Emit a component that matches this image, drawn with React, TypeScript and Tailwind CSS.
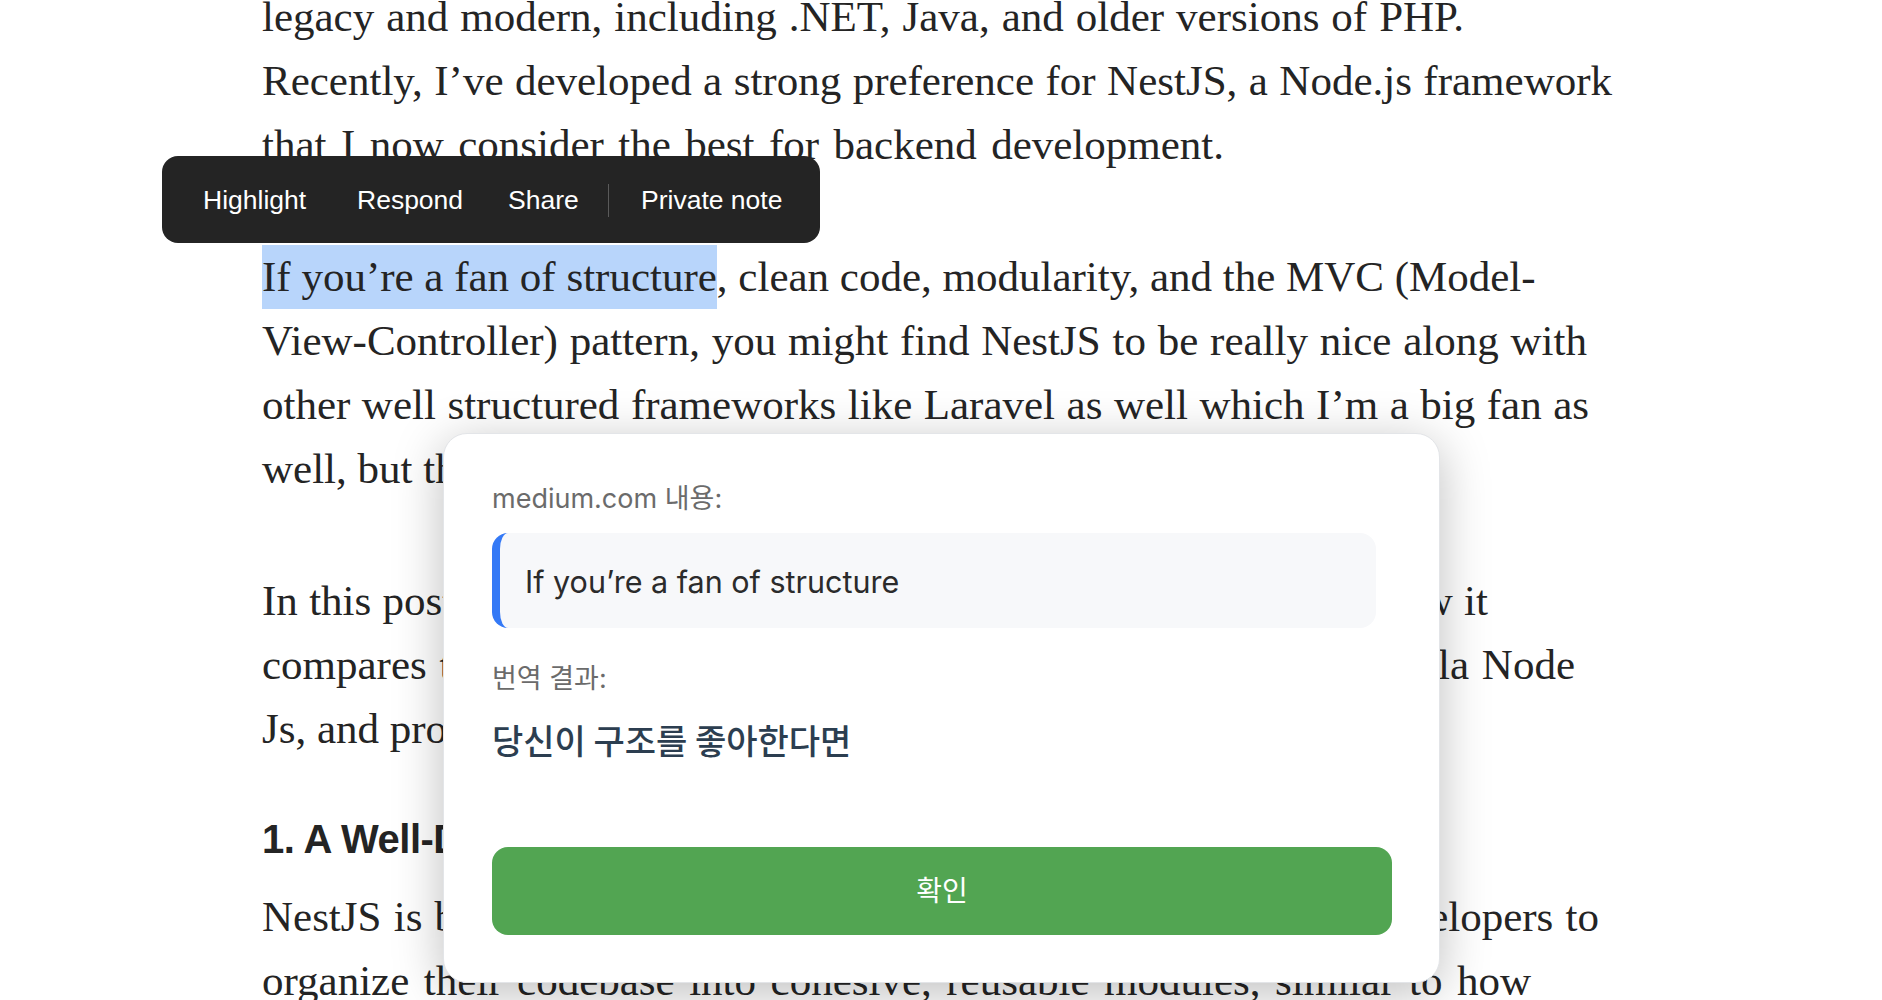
import React from "react";

const serif = "font-['Liberation_Serif','Times_New_Roman',serif]";

function Line({ w, children }: { w: number; children: React.ReactNode }) {
  return (
    <div
      className="whitespace-nowrap text-justify [text-align-last:justify]"
      style={{ width: w }}
    >
      {children}
    </div>
  );
}

export default function App() {
  return (
    <div className="relative w-[1882px] h-[1000px] overflow-hidden bg-white text-[#242424]">
      <div className={`${serif} text-[43px] leading-[64px] pl-[262px]`}>
        <div className="mt-[-15px]">
          <Line w={1202}>legacy and modern, including .NET, Java, and older versions of PHP.</Line>
          <Line w={1350}>Recently, I’ve developed a strong preference for NestJS, a Node.js framework</Line>
          <Line w={962}>that I now consider the best for backend development.</Line>
        </div>
        <div className="mt-[68px]">
          <Line w={1273}>
            <span className="inline-block bg-[#b8d5fb]">If you’re a fan of structure</span>, clean code, modularity, and the MVC (Model-
          </Line>
          <Line w={1325}>View-Controller) pattern, you might find NestJS to be really nice along with</Line>
          <Line w={1327}>other well structured frameworks like Laravel as well which I’m a big fan as</Line>
          <div className="whitespace-nowrap">well, but that’s a story for another time.</div>
        </div>
        <div className="mt-[68px]">
          <Line w={1226}>In this post, I’ll walk through why I think NestJS is really great, how it</Line>
          <Line w={1313}>compares to other popular frameworks such as Express.js and vanilla Node</Line>
          <div className="whitespace-nowrap">Js, and provide some examples.</div>
        </div>
        <h2 className="mt-[52px] font-['Liberation_Sans',Arial,sans-serif] font-bold text-[40px] leading-[52px] tracking-[-0.5px]">
          1. A Well-Defined Architecture
        </h2>
        <div className="mt-[20px]">
          <Line w={1337}>NestJS is built around a modular architecture, which allows all developers to</Line>
          <Line w={1269}>organize their codebase into cohesive, reusable modules, similar to how</Line>
        </div>
      </div>

      {/* selection toolbar */}
      <div className="absolute left-[162px] top-[156px] w-[658px] h-[87px] rounded-[16px] bg-[#242424] flex items-center pl-[41px] pt-[2px] text-white font-['Liberation_Sans',Arial,sans-serif] text-[26.5px]">
        <span className="w-[154px]">Highlight</span>
        <span className="w-[151px]">Respond</span>
        <span className="w-[100px]">Share</span>
        <span className="w-px h-[33px] bg-[#5a5a5a]" />
        <span className="ml-[32px]">Private note</span>
      </div>

      {/* translation popup */}
      <div className="absolute left-[443px] top-[433px] w-[997px] h-[550px] rounded-[24px] bg-white border border-[#e3e5e8] shadow-[0_10px_50px_rgba(0,0,0,0.26)] pl-[48px] pt-[47px] font-['Inter','Noto_Sans_CJK_KR',sans-serif]">
        <div className="text-[27px] leading-[36px] text-[#6b6b6b]">medium.com 내용:</div>
        <div className="mt-[16px] w-[884px] h-[95px] flex items-center rounded-[16px] bg-[#f7f8fa] border-l-[8px] border-[#3479f6] pl-[25px] pt-[3px] text-[30.5px] text-[#2b2b2b]">
          If you’re a fan of structure
        </div>
        <div className="mt-[33px] text-[27px] leading-[36px] text-[#6b6b6b]">번역 결과:</div>
        <div className="mt-[20px] text-[34px] leading-[46px] font-medium text-[#2c3e50] font-['Noto_Sans_CJK_KR','Inter',sans-serif]">
          당신이 구조를 좋아한다면
        </div>
        <button className="mt-[84px] w-[900px] h-[88px] rounded-[16px] bg-[#52a552] text-white text-[28px] pb-[4px] flex items-center justify-center font-['Noto_Sans_CJK_KR',sans-serif]">
          확인
        </button>
      </div>
    </div>
  );
}
